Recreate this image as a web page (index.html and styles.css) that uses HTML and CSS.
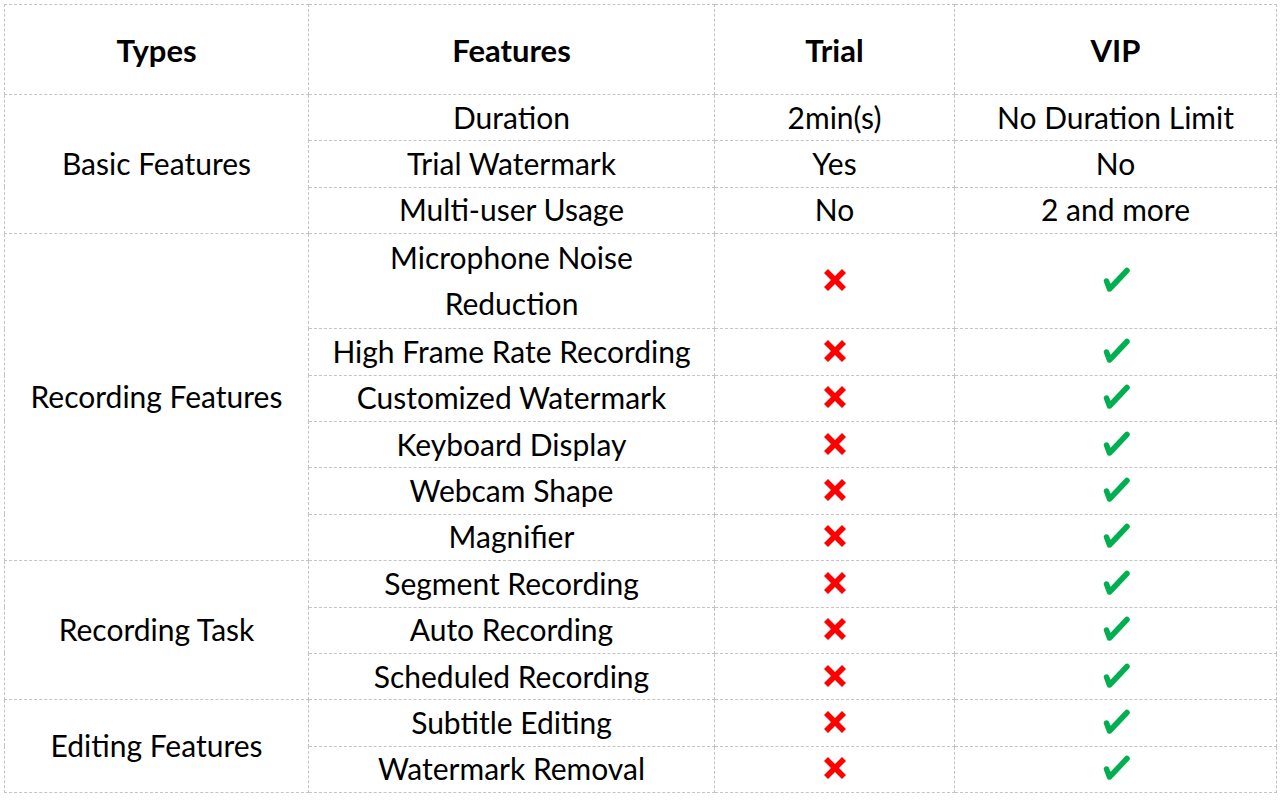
FILE: index.html
```html
<!DOCTYPE html>
<html>
<head>
<meta charset="utf-8">
<link rel="stylesheet" href="styles.css">
</head>
<body>
<svg width="0" height="0" class="defs">
  <defs>
    <symbol id="no" viewBox="0 0 24 24">
      <path d="M5 1 L12 8 L19 1 L23 5 L16 12 L23 19 L19 23 L12 16 L5 23 L1 19 L8 12 L1 5 Z" fill="#ff0000"/>
    </symbol>
    <symbol id="yes" viewBox="0 0 28 26">
      <path d="M4.5 14 L7.5 22 L25 3.5" fill="none" stroke="#00b050" stroke-width="5.5" stroke-linecap="round" stroke-linejoin="round"/>
    </symbol>
  </defs>
</svg>
<table class="cmp">
  <colgroup>
    <col class="c1"><col class="c2"><col class="c3"><col class="c4">
  </colgroup>
  <thead>
    <tr class="head"><th>Types</th><th>Features</th><th>Trial</th><th>VIP</th></tr>
  </thead>
  <tbody>
    <tr><td rowspan="3">Basic Features</td><td>Duration</td><td>2min(s)</td><td>No Duration Limit</td></tr>
    <tr><td>Trial Watermark</td><td>Yes</td><td>No</td></tr>
    <tr><td>Multi-user Usage</td><td>No</td><td>2 and more</td></tr>
    <tr class="tall"><td rowspan="6">Recording Features</td><td class="two">Microphone Noise<br>Reduction</td><td><svg class="ic x"><use href="#no"/></svg></td><td><svg class="ic v"><use href="#yes"/></svg></td></tr>
    <tr><td>High Frame Rate Recording</td><td><svg class="ic x"><use href="#no"/></svg></td><td><svg class="ic v"><use href="#yes"/></svg></td></tr>
    <tr><td>Customized Watermark</td><td><svg class="ic x"><use href="#no"/></svg></td><td><svg class="ic v"><use href="#yes"/></svg></td></tr>
    <tr><td>Keyboard Display</td><td><svg class="ic x"><use href="#no"/></svg></td><td><svg class="ic v"><use href="#yes"/></svg></td></tr>
    <tr><td>Webcam Shape</td><td><svg class="ic x"><use href="#no"/></svg></td><td><svg class="ic v"><use href="#yes"/></svg></td></tr>
    <tr><td>Magnifier</td><td><svg class="ic x"><use href="#no"/></svg></td><td><svg class="ic v"><use href="#yes"/></svg></td></tr>
    <tr><td rowspan="3">Recording Task</td><td>Segment Recording</td><td><svg class="ic x"><use href="#no"/></svg></td><td><svg class="ic v"><use href="#yes"/></svg></td></tr>
    <tr><td>Auto Recording</td><td><svg class="ic x"><use href="#no"/></svg></td><td><svg class="ic v"><use href="#yes"/></svg></td></tr>
    <tr><td>Scheduled Recording</td><td><svg class="ic x"><use href="#no"/></svg></td><td><svg class="ic v"><use href="#yes"/></svg></td></tr>
    <tr><td rowspan="2">Editing Features</td><td>Subtitle Editing</td><td><svg class="ic x"><use href="#no"/></svg></td><td><svg class="ic v"><use href="#yes"/></svg></td></tr>
    <tr><td>Watermark Removal</td><td><svg class="ic x"><use href="#no"/></svg></td><td><svg class="ic v"><use href="#yes"/></svg></td></tr>
  </tbody>
</table>
</body>
</html>
```

FILE: styles.css
```css
html, body {
  margin: 0;
  padding: 0;
  background: #ffffff;
}
body {
  padding: 4px;
  font-family: Lato, "Open Sans", sans-serif;
  color: #000;
}
.defs {
  position: absolute;
  width: 0;
  height: 0;
}
.cmp {
  border-collapse: collapse;
  table-layout: fixed;
  width: 1273px;
}
.c1 { width: 304px; }
.c2 { width: 406px; }
.c3 { width: 240px; }
.c4 { width: 322px; }
.cmp th, .cmp td {
  border: 1px dashed #c4c4c4;
  text-align: center;
  vertical-align: middle;
  padding: 0 0 2px 0;
  font-size: 30px;
  line-height: 40px;
  white-space: nowrap;
}
.cmp th {
  font-weight: 700;
  font-size: 31px;
  height: 89px;
  padding: 0;
}
.cmp tbody tr {
  height: 46.4px;
}
.cmp tbody tr.tall {
  height: 92.8px;
}
.cmp td.two {
  line-height: 46px;
}
.ic {
  display: block;
  margin: 0 auto;
}
.ic.x {
  width: 24px;
  height: 24px;
}
.ic.v {
  width: 28px;
  height: 26px;
}
```
